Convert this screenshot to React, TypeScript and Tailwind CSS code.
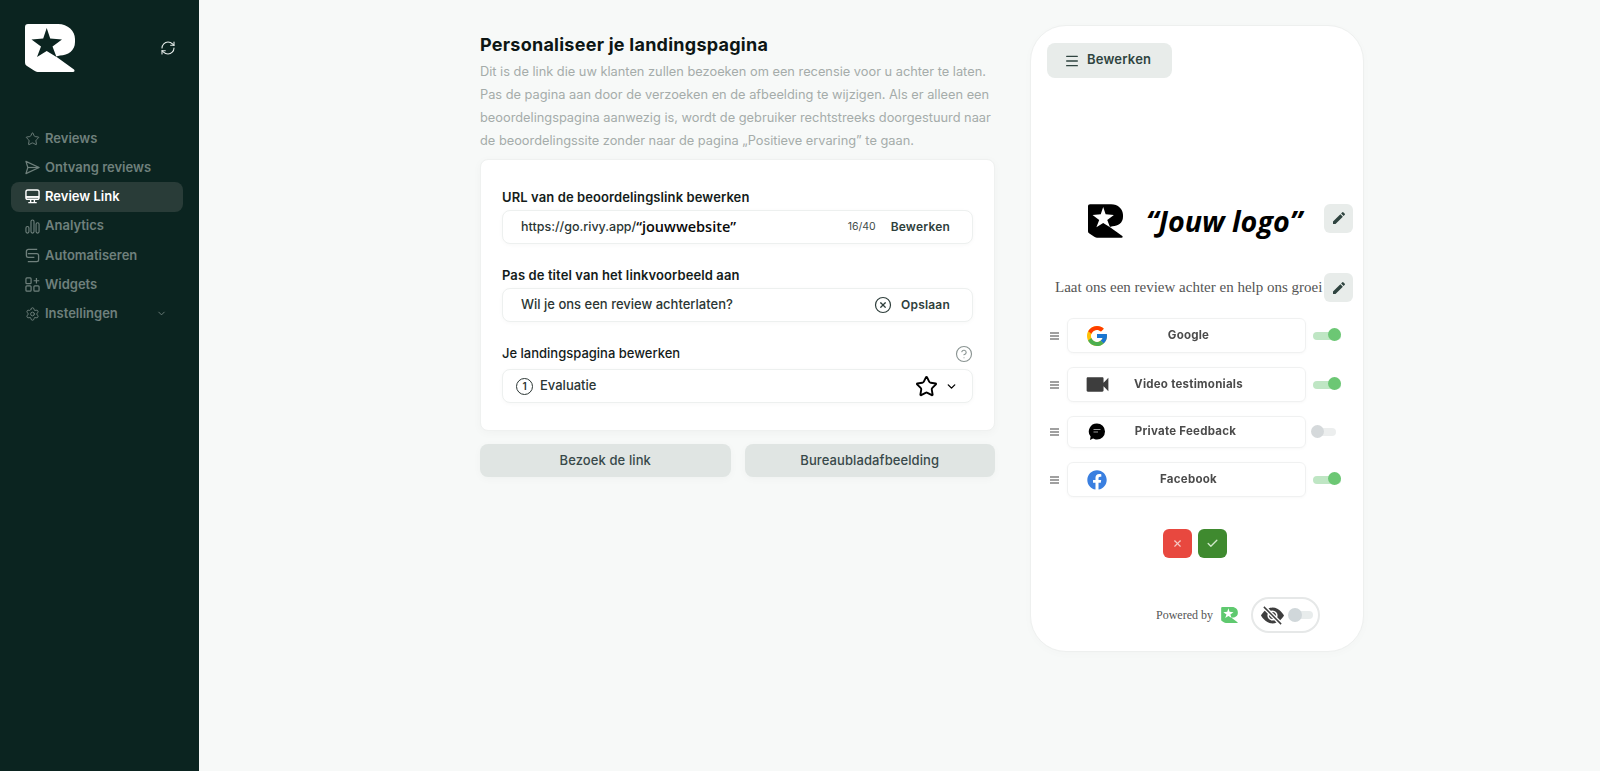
import React from "react";
import { Star, Settings, ChevronDown, CircleX, CircleHelp, Menu, X, Check, RefreshCw } from "lucide-react";
import { MdEdit, MdVideocam } from "react-icons/md";
import { BsEyeSlashFill } from "react-icons/bs";
import { FcGoogle } from "react-icons/fc";
import { FaFacebook } from "react-icons/fa";

const LOGO =
  "M3 0H33C43 0 50 7 50 15V18C50 27 43 31 35 31.5L31 32.5L49 45.5C50 46.5 49.5 48 48 48H14C12 48 11 47.5 9 46.5L2 42C.5 41 0 40 0 38V3C0 1 1 0 3 0Z";
const STAR = "M21.7 4L25.2 14.5L37 15.5L27.5 22.5L31.5 33L21.7 27L12 33L16 22.5L6.5 15.5L18.2 14.5Z";

function Logo({ className, fg, star }: { className: string; fg: string; star: string }) {
  return (
    <svg viewBox="0 0 50 48" className={className}>
      <path d={LOGO} fill={fg} />
      <path d={STAR} fill={star} />
    </svg>
  );
}

function SendIcon() {
  return (
    <svg viewBox="0 0 16 16" className="w-[15px] h-[15px]" fill="none" stroke="currentColor" strokeWidth="1.3" strokeLinejoin="round">
      <path d="M1 1.5L15 8L1 14.5L3 8Z" />
      <path d="M3 8H15" />
    </svg>
  );
}
function MonitorIcon() {
  return (
    <svg viewBox="0 0 16 16" className="w-[15px] h-[15px]" fill="none" stroke="currentColor" strokeWidth="1.5">
      <rect x="1" y="1" width="14" height="10" rx="2" />
      <path d="M1 8.5H15" strokeWidth="2" />
      <path d="M6 11V14M10 11V14M3.5 14.5H12.5" />
    </svg>
  );
}
function BarsIcon() {
  return (
    <svg viewBox="0 0 16 16" className="w-[15px] h-[15px]" fill="none" stroke="currentColor" strokeWidth="1.2">
      <rect x="1" y="8" width="3.2" height="7" rx="1.6" />
      <rect x="6.4" y="1" width="3.2" height="14" rx="1.6" />
      <rect x="11.8" y="4" width="3.2" height="11" rx="1.6" />
    </svg>
  );
}
function AutoIcon() {
  return (
    <svg viewBox="0 0 16 16" className="w-[15px] h-[15px]" fill="none" stroke="currentColor" strokeWidth="1.4">
      <path d="M13 1.5H3.5a2 2 0 0 0-2 2V8a2 2 0 0 0 2 2H10" />
      <path d="M3 6h9.5a2 2 0 0 1 2 2v4.5a2 2 0 0 1-2 2H3" />
    </svg>
  );
}
function WidgetIcon() {
  return (
    <svg viewBox="0 0 16 16" className="w-[15px] h-[15px]" fill="none" stroke="currentColor" strokeWidth="1.3">
      <rect x="1" y="1" width="5.5" height="6" rx="1" />
      <rect x="1" y="9.5" width="5.5" height="5.5" rx="1" />
      <rect x="9.5" y="9.5" width="5.5" height="5.5" rx="1" />
      <path d="M12.2 1V7M9.2 4H15.2" />
    </svg>
  );
}

const NAV = [
  { label: "Reviews", icon: <Star className="w-[16px] h-[16px]" strokeWidth={1.5} /> },
  { label: "Ontvang reviews", icon: <SendIcon /> },
  { label: "Review Link", icon: <MonitorIcon />, active: true },
  { label: "Analytics", icon: <BarsIcon /> },
  { label: "Automatiseren", icon: <AutoIcon /> },
  { label: "Widgets", icon: <WidgetIcon /> },
  { label: "Instellingen", icon: <Settings className="w-[16px] h-[16px]" strokeWidth={1.5} />, chevron: true },
];

function Sidebar() {
  return (
    <aside className="w-[199px] shrink-0 bg-[#0b2420] min-h-[771px] pl-[11px] pr-[16px]">
      <div className="flex items-center justify-between h-[48px] mt-[24px] pl-[14px] pr-[7px]">
        <Logo className="w-[50px] h-[48px]" fg="#ffffff" star="#0b2420" />
        <RefreshCw className="w-[16px] h-[16px] text-[#e8eeec]" strokeWidth={1.6} />
      </div>
      <nav className="mt-[52px] flex flex-col">
        {NAV.map((n) => (
          <div
            key={n.label}
            className={
              n.active
                ? "h-[29.2px] flex items-center gap-[5px] pl-[14px] pr-[16px] rounded-lg bg-[#293c38] text-white"
                : "h-[29.2px] flex items-center gap-[5px] pl-[14px] pr-[16px] rounded-lg text-[#6f807c]"
            }
          >
            <span className="w-[15px] flex justify-center">{n.icon}</span>
            <span className="text-[13px] font-semibold flex-1">{n.label}</span>
            {n.chevron && <ChevronDown className="w-[11px] h-[11px]" strokeWidth={2} />}
          </div>
        ))}
      </nav>
    </aside>
  );
}

function Field({ children }: { children: React.ReactNode }) {
  return (
    <div className="h-[34px] rounded-lg border border-[#edf0ef] bg-white shadow-[0_1px_4px_rgba(0,0,0,0.03)] flex items-center">
      {children}
    </div>
  );
}

function Left() {
  return (
    <div className="w-[515px] shrink-0">
      <h1 className="text-[18px] leading-[24px] font-bold text-[#0d1614] mt-[8px] tracking-[0.25px]">
        Personaliseer je landingspagina
      </h1>
      <p className="text-[12.8px] leading-[23px] text-[#a5acaa] mt-[3px] whitespace-nowrap">
        Dit is de link die uw klanten zullen bezoeken om een recensie voor u achter te laten.
        <br />
        Pas de pagina aan door de verzoeken en de afbeelding te wijzigen. Als er alleen een
        <br />
        beoordelingspagina aanwezig is, wordt de gebruiker rechtstreeks doorgestuurd naar
        <br />
        de beoordelingssite zonder naar de pagina „Positieve ervaring” te gaan.
      </p>
      <section className="mt-[7px] h-[272px] rounded-lg bg-white border border-[#eff1f0] shadow-[0_2px_10px_rgba(0,0,0,0.03)] px-[21px] pt-[28px]">
        <div className="text-[13px] leading-[18px] font-semibold text-[#141c1a] tracking-[0.1px]">
          URL van de beoordelingslink bewerken
        </div>
        <div className="mt-[4px]">
          <Field>
            <span className="pl-[18px] text-[12.5px] font-medium text-[#2b3634]">https://go.rivy.app/</span>
            <span className="text-[14.5px] font-semibold text-[#0a0a0a] font-['Open_Sans',sans-serif]">“jouwwebsite”</span>
            <span className="ml-auto text-[10.5px] text-[#404b49]">16/40</span>
            <span className="ml-[15px] mr-[22px] text-[12px] font-semibold text-[#2f3f3c] tracking-[0.2px]">Bewerken</span>
          </Field>
        </div>
        <div className="mt-[22px] text-[13px] leading-[18px] font-semibold text-[#141c1a] tracking-[0.1px]">
          Pas de titel van het linkvoorbeeld aan
        </div>
        <div className="mt-[4px]">
          <Field>
            <span className="pl-[18px] text-[13px] font-medium text-[#2b3634]">Wil je ons een review achterlaten?</span>
            <CircleX className="ml-auto w-[18px] h-[18px] text-[#2f3f3c]" strokeWidth={1.6} />
            <span className="ml-[9px] mr-[22px] text-[12px] font-semibold text-[#2f3f3c] tracking-[0.2px]">Opslaan</span>
          </Field>
        </div>
        <div className="mt-[23px] flex items-center justify-between h-[18px]">
          <span className="text-[13px] font-medium text-[#141c1a]">Je landingspagina bewerken</span>
          <CircleHelp className="w-[18px] h-[18px] text-[#8a9492]" strokeWidth={1.5} />
        </div>
        <div className="mt-[6px]">
          <Field>
            <span className="ml-[13px] w-[17px] h-[17px] rounded-full border border-[#2b3634] flex items-center justify-center text-[10px] font-semibold text-[#2b3634]">1</span>
            <span className="ml-[7px] text-[13px] font-medium text-[#2b3634]">Evaluatie</span>
            <Star className="ml-auto w-[23px] h-[23px] text-black" strokeWidth={2} />
            <ChevronDown className="ml-[7px] mr-[14px] w-[13px] h-[13px] text-black" strokeWidth={2.5} />
          </Field>
        </div>
      </section>
      <div className="mt-[13px] grid grid-cols-2 gap-[14px]">
        <div className="h-[33px] rounded-lg bg-[#e0e5e3] flex items-center justify-center text-[13px] font-medium text-[#38494a] tracking-[0.1px] shadow-[0_2px_8px_rgba(0,0,0,0.03)]">
          Bezoek de link
        </div>
        <div className="h-[33px] rounded-lg bg-[#e0e5e3] flex items-center justify-center text-[13px] font-medium text-[#38494a] tracking-[0.1px] shadow-[0_2px_8px_rgba(0,0,0,0.03)]">
          Bureaubladafbeelding
        </div>
      </div>
    </div>
  );
}

function EditBtn() {
  return (
    <div className="w-[29px] h-[29px] shrink-0 rounded-md bg-[#e8ecea] flex items-center justify-center">
      <MdEdit className="w-[16px] h-[16px] text-[#2f4440]" />
    </div>
  );
}

function Toggle({ on }: { on: boolean }) {
  return (
    <div className={on ? "relative w-[28px] h-[8px] rounded-full bg-[#bfe6c4]" : "relative w-[24px] h-[8px] rounded-full bg-[#eceeee] -ml-[1px]"}>
      <div
        className={
          on
            ? "absolute right-0 -top-[3.5px] w-[13px] h-[13px] rounded-full bg-[#6cc774]"
            : "absolute -left-[1px] -top-[3px] w-[13px] h-[13px] rounded-full bg-[#d5d9db]"
        }
      />
    </div>
  );
}

function Row({ h, mt, icon, label, on, off }: { h: string; mt: string; icon: React.ReactNode; label: string; on: boolean; off: string }) {
  return (
    <div className={`flex items-center ${h} ${mt}`}>
      <div className="w-[9px] ml-[19px] flex flex-col gap-[1px]">
        <span className="h-[2px] bg-[#a0a0a0]" />
        <span className="h-[2px] bg-[#a0a0a0]" />
        <span className="h-[2px] bg-[#a0a0a0]" />
      </div>
      <div className="ml-[8px] w-[239px] h-full rounded-md border border-[#f0f1f1] bg-white shadow-[0_1px_3px_rgba(0,0,0,0.03)] flex items-center relative">
        <span className="ml-[19px] w-[20px] flex justify-center">{icon}</span>
        <span className={`absolute left-0 right-0 text-center text-[11.5px] font-bold text-[#4b4b4b] tracking-[0.25px] ${off}`}>{label}</span>
      </div>
      <div className="ml-[7px]">
        <Toggle on={on} />
      </div>
    </div>
  );
}

function FeedbackIcon() {
  return (
    <svg viewBox="0 0 18 18" className="w-[18px] h-[18px] shrink-0">
      <path d="M9 0.5A8 8 0 0 1 9 16.5C7.5 16.5 6 16 5 15.5L2 17L2.6 13.5A8 8 0 0 1 9 0.5Z" fill="#000000" />
      <path d="M5.5 6.5H12.5M5.5 9H10" stroke="#9a9a9a" strokeWidth="1.1" />
    </svg>
  );
}

function Phone() {
  return (
    <div className="w-[334px] h-[627px] shrink-0 rounded-[36px] bg-white border border-[#eef0ef] shadow-[0_2px_10px_rgba(0,0,0,0.02)] pt-[17px]">
      <div className="ml-[16px] w-[125px] h-[35px] rounded-lg bg-[#e8ecea] flex items-center pl-[17px] gap-[7px]">
        <Menu className="w-[16px] h-[16px] text-[#2f4440]" strokeWidth={2} />
        <span className="text-[13px] font-semibold text-[#2f4440] tracking-[0.2px] -mt-[1px]">Bewerken</span>
      </div>
      <div className="mt-[125px] flex items-center h-[36px] pl-[57px]">
        <Logo className="w-[35px] h-[34px]" fg="#000000" star="#ffffff" />
        <span className="ml-[23px] text-[28.7px] leading-[36px] font-bold italic text-black font-['Open_Sans',sans-serif] whitespace-nowrap">“Jouw logo”</span>
        <span className="ml-[22px] -mt-[6px]"><EditBtn /></span>
      </div>
      <div className="mt-[34px] flex items-center h-[29px] pl-[24px]">
        <span className="w-[269px] text-[15px] text-[#555555] font-['Liberation_Serif',serif] whitespace-nowrap">Laat ons een review achter en help ons groei</span>
        <EditBtn />
      </div>
      <div className="blur-[0.6px]">
        <Row h="h-[35px]" mt="mt-[16px]" on icon={<FcGoogle className="w-[24px] h-[24px] shrink-0" />} label="Google" off="translate-x-[2px]" />
        <Row h="h-[35px]" mt="mt-[14px]" on icon={<MdVideocam className="w-[29px] h-[29px] shrink-0 text-[#3d3d3d]" />} label="Video testimonials" off="translate-x-[2px]" />
        <Row h="h-[32px]" mt="mt-[14px]" on={false} icon={<FeedbackIcon />} label="Private Feedback" off="-translate-x-[1px]" />
        <Row h="h-[35px]" mt="mt-[14px]" on icon={<FaFacebook className="w-[20px] h-[20px] shrink-0 text-[#3a7fe0]" />} label="Facebook" off="translate-x-[2px]" />
      </div>
      <div className="mt-[32px] flex justify-start pl-[132px] gap-[6px] blur-[0.3px]">
        <div className="w-[29px] h-[29px] rounded-md bg-[#e8483f] flex items-center justify-center"><X className="w-[11px] h-[11px] text-[#f6c9c5]" strokeWidth={2.5} /></div>
        <div className="w-[29px] h-[29px] rounded-md bg-[#3f8a2f] flex items-center justify-center"><Check className="w-[13px] h-[13px] text-[#cfe8c9]" strokeWidth={2.5} /></div>
      </div>
      <div className="mt-[39px] flex items-center pl-[125px]">
        <span className="text-[12px] text-[#555555] font-['Liberation_Serif',serif] whitespace-nowrap">Powered by</span>
        <Logo className="ml-[8px] w-[17px] h-[16px]" fg="#5fc96f" star="#ffffff" />
        <div className="ml-[13px] w-[69px] h-[36px] rounded-full border-2 border-[#e6e8e8] flex items-center pl-[8px]">
          <BsEyeSlashFill className="w-[23px] h-[23px] shrink-0 text-[#3d3d3d]" />
          <div className="relative ml-[5px] w-[24px] h-[8px] rounded-full bg-[#e8ecec]">
            <div className="absolute -left-[1px] -top-[3px] w-[14px] h-[14px] rounded-full bg-[#d0d7da]" />
          </div>
        </div>
      </div>
    </div>
  );
}

export default function App() {
  return (
    <div className="flex min-h-[771px] bg-[#f7f9f8] font-['Inter',sans-serif]">
      <Sidebar />
      <main className="flex-1 pl-[281px] pt-[25px] flex gap-[35px] items-start">
        <Left />
        <Phone />
      </main>
    </div>
  );
}
